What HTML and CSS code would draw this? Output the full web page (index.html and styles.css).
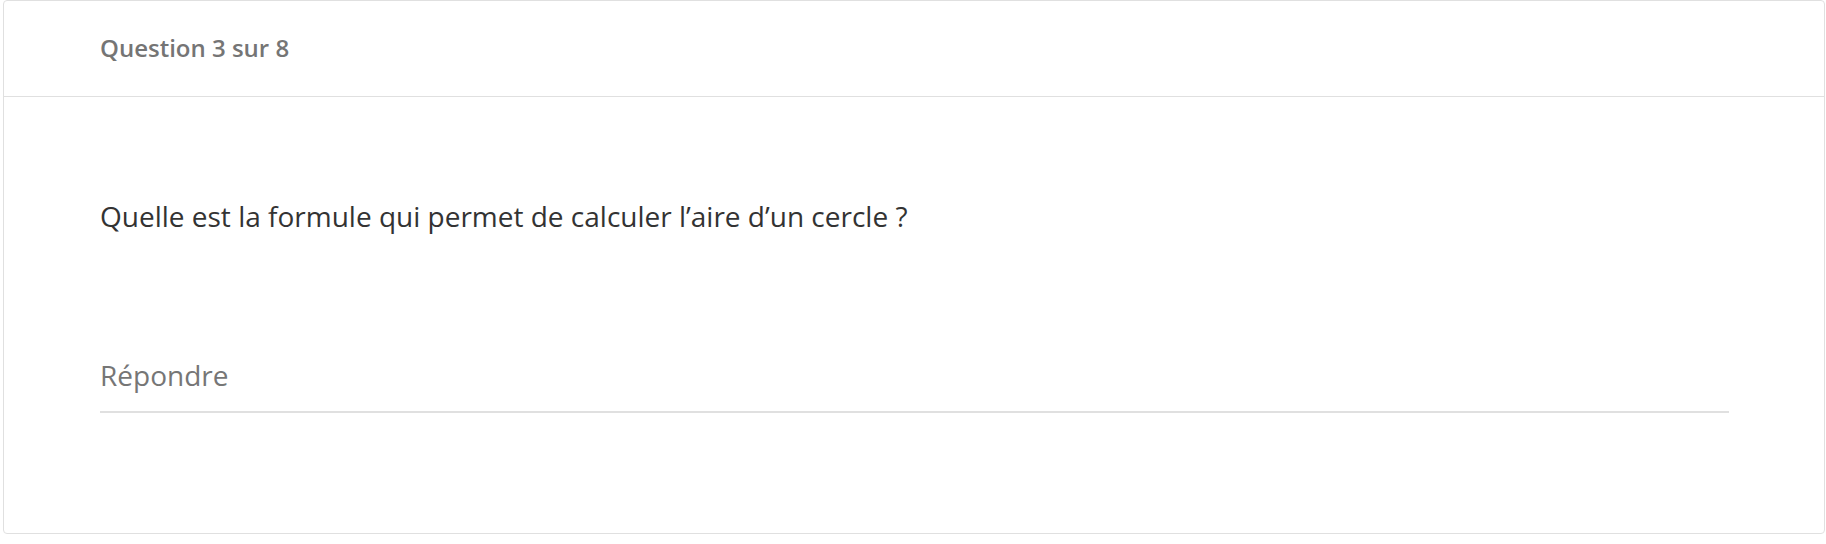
FILE: index.html
```html
<!DOCTYPE html>
<html lang="fr">
<head>
<meta charset="utf-8">
<title>Question 3 sur 8</title>
<link rel="stylesheet" href="styles.css">
</head>
<body>
<div class="card">
  <div class="card-header">
    <span class="counter">Question 3 sur 8</span>
  </div>
  <div class="card-body">
    <p class="question">Quelle est la formule qui permet de calculer l’aire d’un cercle ?</p>
    <div class="answer">
      <input class="answer-input" type="text" placeholder="Répondre">
    </div>
  </div>
</div>
</body>
</html>
```

FILE: styles.css
```css
html, body {
  margin: 0;
  padding: 0;
  background: #ffffff;
}

body {
  font-family: "Open Sans", "Noto Sans", sans-serif;
  padding: 0 1px 0 3px;
}

.card {
  box-sizing: border-box;
  height: 534px;
  border: 1px solid #e0e0e0;
  border-radius: 4px;
  background: #ffffff;
}

.card-header {
  box-sizing: border-box;
  height: 96px;
  border-bottom: 1px solid #e0e0e0;
  padding: 31px 0 0 96px;
}

.counter {
  display: block;
  font-size: 24px;
  font-weight: 600;
  line-height: 32px;
  color: #757575;
}

.card-body {
  padding: 0 96px 0 96px;
}

.question {
  margin: 101px 0 0 0;
  font-size: 28px;
  line-height: 36px;
  color: #333333;
}

.answer {
  margin-top: 118px;
  width: 1629px;
  border-bottom: 2px solid #e0e0e0;
}

.answer-input {
  display: block;
  box-sizing: border-box;
  width: 100%;
  border: none;
  outline: none;
  padding: 0 0 13px 0;
  height: 59px;
  font-family: "Open Sans", "Noto Sans", sans-serif;
  font-size: 28px;
  color: #333333;
  background: transparent;
}

.answer-input::placeholder {
  color: #767676;
}
```
